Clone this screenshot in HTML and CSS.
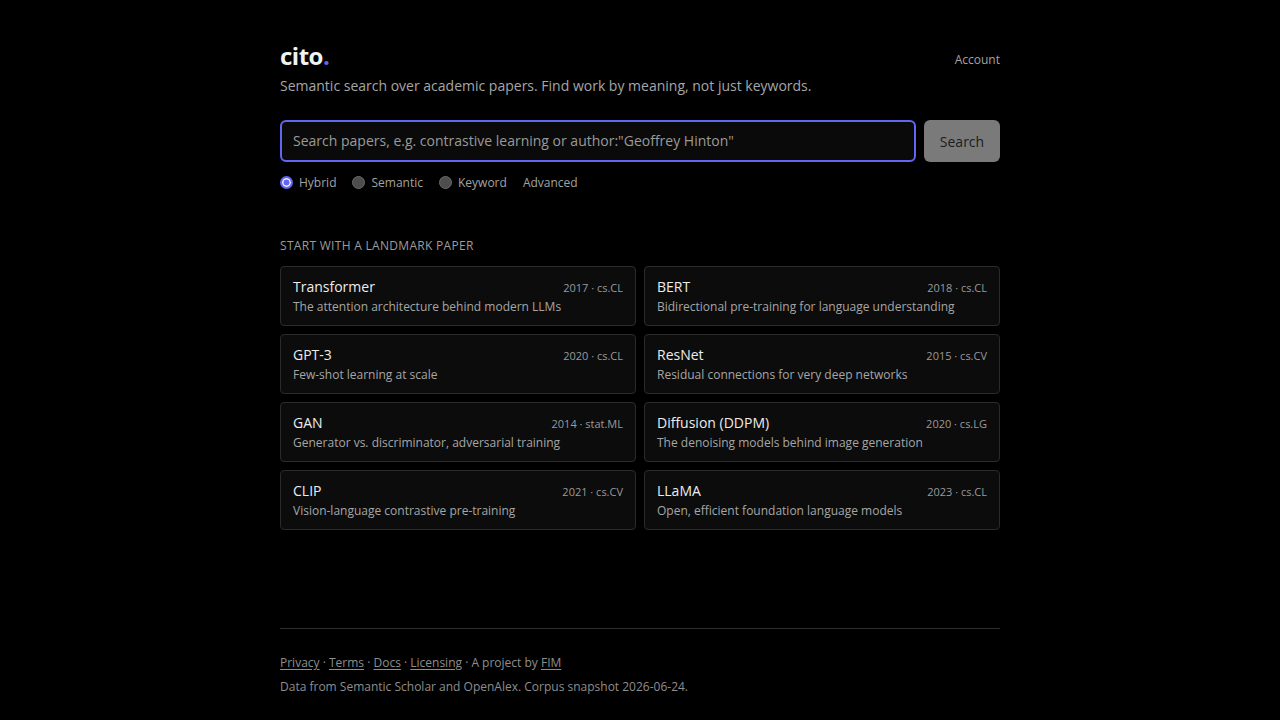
FILE: index.html
```html
<!DOCTYPE html>
<html lang="en">
<head>
  <meta charset="UTF-8">
  <title>cito. — semantic search over academic papers</title>
  <link rel="stylesheet" href="styles.css">
</head>
<body>
  <div class="page">
    <header class="top">
      <div class="logo">cito<span class="dot">.</span></div>
      <a class="account" href="#">Account</a>
    </header>
    <p class="tagline">Semantic search over academic papers. Find work by meaning, not just keywords.</p>

    <form class="search">
      <input class="search-input" type="text" placeholder="Search papers, e.g. contrastive learning or author:&quot;Geoffrey Hinton&quot;">
      <button class="search-btn" type="button">Search</button>
    </form>

    <div class="modes">
      <label class="mode"><input type="radio" name="mode" checked> Hybrid</label>
      <label class="mode"><input type="radio" name="mode"> Semantic</label>
      <label class="mode"><input type="radio" name="mode"> Keyword</label>
      <a class="advanced" href="#">Advanced</a>
    </div>

    <h2 class="section-label">Start with a landmark paper</h2>
    <div class="cards">
      <a class="card" href="#">
        <div class="card-head"><span class="card-title">Transformer</span><span class="card-meta">2017 · cs.CL</span></div>
        <div class="card-desc">The attention architecture behind modern LLMs</div>
      </a>
      <a class="card" href="#">
        <div class="card-head"><span class="card-title">BERT</span><span class="card-meta">2018 · cs.CL</span></div>
        <div class="card-desc">Bidirectional pre-training for language understanding</div>
      </a>
      <a class="card" href="#">
        <div class="card-head"><span class="card-title">GPT-3</span><span class="card-meta">2020 · cs.CL</span></div>
        <div class="card-desc">Few-shot learning at scale</div>
      </a>
      <a class="card" href="#">
        <div class="card-head"><span class="card-title">ResNet</span><span class="card-meta">2015 · cs.CV</span></div>
        <div class="card-desc">Residual connections for very deep networks</div>
      </a>
      <a class="card" href="#">
        <div class="card-head"><span class="card-title">GAN</span><span class="card-meta">2014 · stat.ML</span></div>
        <div class="card-desc">Generator vs. discriminator, adversarial training</div>
      </a>
      <a class="card" href="#">
        <div class="card-head"><span class="card-title">Diffusion (DDPM)</span><span class="card-meta">2020 · cs.LG</span></div>
        <div class="card-desc">The denoising models behind image generation</div>
      </a>
      <a class="card" href="#">
        <div class="card-head"><span class="card-title">CLIP</span><span class="card-meta">2021 · cs.CV</span></div>
        <div class="card-desc">Vision-language contrastive pre-training</div>
      </a>
      <a class="card" href="#">
        <div class="card-head"><span class="card-title">LLaMA</span><span class="card-meta">2023 · cs.CL</span></div>
        <div class="card-desc">Open, efficient foundation language models</div>
      </a>
    </div>

    <footer class="footer">
      <p class="footer-links"><a href="#">Privacy</a> · <a href="#">Terms</a> · <a href="#">Docs</a> · <a href="#">Licensing</a> · A project by <a href="#">FIM</a></p>
      <p class="footer-note">Data from Semantic Scholar and OpenAlex. Corpus snapshot 2026-06-24.</p>
    </footer>
  </div>
</body>
</html>
```

FILE: styles.css
```css
body { margin: 0; background: #000; color: #e8e8e8; font-family: "Open Sans", "Noto Sans", sans-serif; }
a { color: inherit; text-decoration: none; }
.page { width: 720px; margin: 0 auto; padding-top: 40px; }

.top { display: flex; justify-content: space-between; align-items: center; height: 32px; }
.logo { font-size: 24px; font-weight: 700; line-height: 32px; color: #f2f2f2; letter-spacing: -0.5px; }
.logo .dot { color: #6366f1; }
.account { font-size: 12px; color: #a3a3a3; margin-top: 7px; }
.tagline { margin: 4px 0 0; font-size: 14px; line-height: 20px; color: #a6a6a6; }

.search { display: flex; gap: 8px; margin-top: 24px; }
.search-input { flex: 1; height: 42px; box-sizing: border-box; background: #0a0a0a; border: 2px solid #6366f1; border-radius: 6px; padding: 0 11px 1px; font: 14px "Open Sans", sans-serif; color: #eee; outline: none; }
.search-input::placeholder { color: #9a9a9a; }
.search-btn { width: 76px; height: 42px; background: #7a7a7a; color: #1c1c1c; border: 0; border-radius: 6px; padding-bottom: 1px; font: 14px "Open Sans", sans-serif; }

.modes { display: flex; align-items: center; margin-top: 11px; height: 18px; font-size: 12px; color: #a3a3a3; }
.mode { display: flex; align-items: center; gap: 6px; margin-right: 16px; }
.mode input { appearance: none; -webkit-appearance: none; margin: 0; width: 13px; height: 13px; border-radius: 50%; background: #4d4d4d; border: 1px solid #6a6a6a; box-sizing: border-box; }
.mode input:checked { background: #6366f1; border: 2px solid #6366f1; box-shadow: inset 0 0 0 1.5px #f4f4ff; }
.advanced { color: #a3a3a3; }

.section-label { margin: 47px 0 12px; font-size: 12px; line-height: 16px; font-weight: 400; text-transform: uppercase; color: #9c9c9c; letter-spacing: 0.3px; }

.cards { display: grid; grid-template-columns: 1fr 1fr; gap: 8px; }
.card { display: block; height: 60px; box-sizing: border-box; padding: 10px 12px; background: #0c0c0c; border: 1px solid #2b2b2b; border-radius: 4px; }
.card-head { display: flex; justify-content: space-between; align-items: baseline; height: 20px; }
.card-title { font-size: 14px; line-height: 20px; color: #ededed; }
.card-meta { font-size: 11px; color: #9a9a9a; }
.card-desc { margin-top: 1px; font-size: 12px; line-height: 18px; color: #a6a6a6; }

.footer { margin-top: 98px; border-top: 1px solid #2e2e2e; padding-top: 25px; font-size: 12px; color: #8e8e8e; }
.footer p { margin: 0; line-height: 18px; }
.footer-note { margin-top: 6px !important; }
.footer-links a { text-decoration: underline; text-underline-offset: 2px; }
```
